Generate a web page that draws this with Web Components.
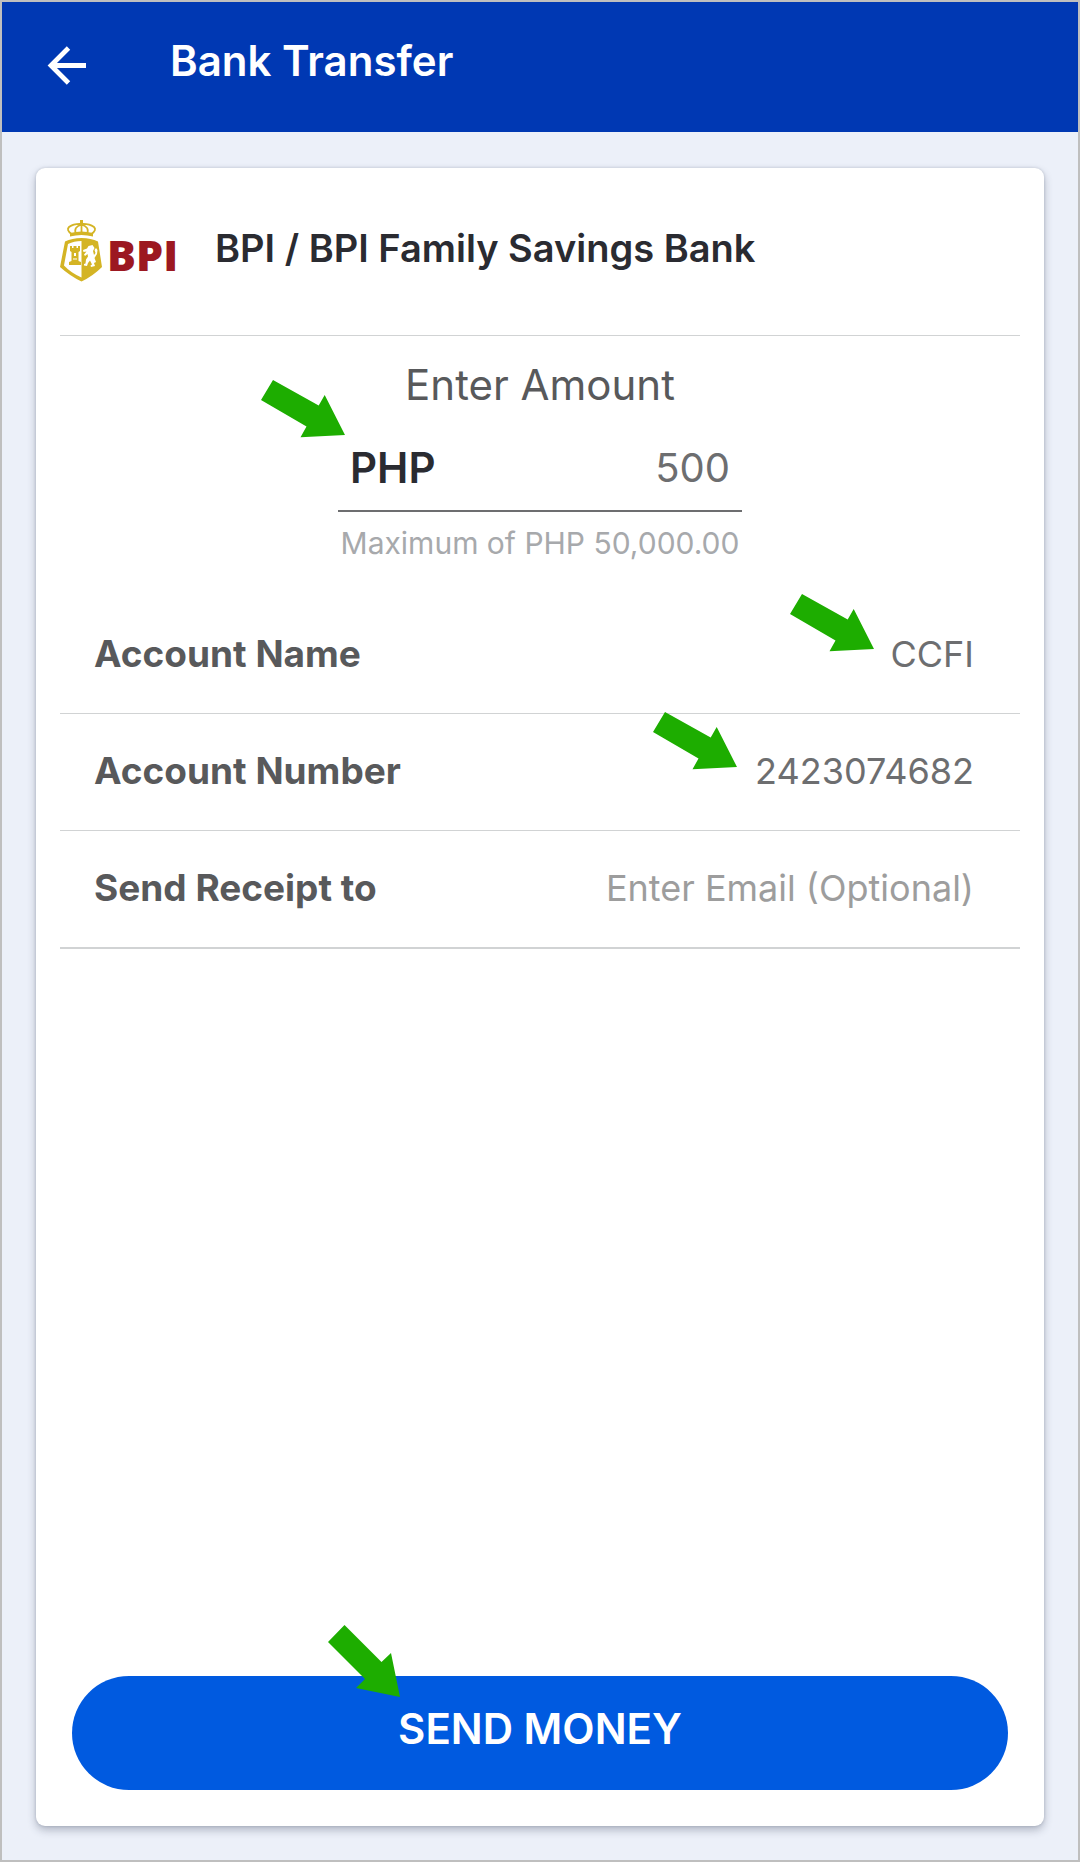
<!DOCTYPE html>
<html lang="en">
<head>
<meta charset="utf-8">
<meta name="viewport" content="width=device-width, initial-scale=1">
<title>Bank Transfer</title>
<style>
  body { margin: 0; background: #ecf0f9; font-family: Inter, "Open Sans", sans-serif; color: #58595b; }
</style>
</head>
<body>
<transfer-page></transfer-page>
<script>
const define = (name, html, setup) => {
  const template = document.createElement('template');
  template.innerHTML = html;
  customElements.define(name, class extends HTMLElement {
    connectedCallback() {
      if (this.shadowRoot) return;
      this.attachShadow({ mode: 'open' }).append(template.content.cloneNode(true));
      if (setup) setup(this, this.shadowRoot);
    }
  });
};

define('app-bar', `
  <style>
    :host { display: flex; align-items: center; box-sizing: border-box; height: 130px; padding: 0 44px; background: #0038b3; color: #fff; }
    button { display: flex; padding: 0; border: 0; background: none; color: inherit; cursor: pointer; }
    svg { width: 44px; height: 44px; }
    h1 { margin: 0 0 12px; padding-left: 80px; font-size: 42px; line-height: 56px; font-weight: 600; }
  </style>
  <button type="button" aria-label="Back">
    <svg viewBox="0 0 44 44" fill="none" stroke="currentColor" stroke-width="4.8"><path d="M40 20.500H5M22.500 3L5 20.500l17.500 17.500"/></svg>
  </button>
  <h1><slot></slot></h1>
`);

define('bank-logo', `
  <style>
    :host { display: block; flex: none; width: 120px; height: 62px; }
    svg { display: block; width: 120px; height: 62px; overflow: visible; }
    text { font: 800 43px "Open Sans", sans-serif; fill: #9c1821; }
  </style>
  <svg viewBox="0 0 120 62" role="img" aria-label="BPI">
    <g fill="none" stroke="#d4b424" stroke-width="1.800">
      <path d="M11.500 14Q6 10 9 7Q14 3.500 21.500 4Q29 3.500 34 7Q37 10 31.500 14M16 14Q13 7 21.500 4.500Q30 7 27 14M21.500 3V14"/>
    </g>
    <path fill="#d4b424" d="M20 0h3v4h-3zM10 13Q21.500 10 33 13V16.500Q21.500 13.500 10 16.500zM21.500 18Q31 18 38 21.500L42 47Q33 56 21.500 61.500Q10 56 0 47L5 21.500Q12 18 21.500 18z"/>
    <path fill="#fff" d="M21.500 21V57.500Q11 53 4 45.500L8 24Q14 21 21.500 21z"/>
    <path fill="#d4b424" d="M10 26h2v2h1.500v-2h3v2H18v-2h2v5l-1.500 1v9l2.500 1v3H9v-3l2.500-1v-9L10 31z"/>
    <path fill="#fff" d="M14 33h2v3h-2zM13 38.500h4v1h-4z"/>
    <path fill="#fff" d="M28.500 26l4-1 2 3-1.500 3 1 4 1.500-2-1-3 1.500-2 1.500 2-.5 4-2.500 4 1.500 4-2 1 1 3-4 1-.5-1.500 1.500-1-2-4-2 2.500-1 3-3-.5v-1.500l1.500-.5.5-4 2-3-.5-2.500-2.500 2-1-1.500 2.500-3-3 .5-.5-2 4-1.500z"/>
    <text x="47" y="51">BPI</text>
  </svg>
`);

define('pointer-arrow', `
  <style>
    :host { position: absolute; z-index: 1; width: 84px; height: 58px; pointer-events: none; }
    :host([steep]) { width: 72px; height: 72px; }
    svg { display: block; width: 100%; height: 100%; overflow: visible; fill: #1dad00; }
    :host([steep]) .flat, :host(:not([steep])) .steep { display: none; }
  </style>
  <svg class="flat" viewBox="0 0 84 58" aria-hidden="true"><path d="M0 20L12 0L57.700 25.500L63.700 15L84 55L39.500 57.300L45.500 46.500z"/></svg>
  <svg class="steep" viewBox="0 0 72 72" aria-hidden="true"><path d="M0 17L16.500 0L53.500 37L63 28L72 72L28 63L37 54z"/></svg>
`);

define('bank-heading', `
  <style>
    :host { display: flex; align-items: center; gap: 35px; padding: 52px 0 53px; border-bottom: 1px solid #d1d3d4; color: #2a2b31; }
    h2 { margin: 0 0 6px; font-size: 38px; line-height: 50px; font-weight: 600; }
  </style>
  <bank-logo></bank-logo>
  <h2><slot></slot></h2>
`);

define('amount-field', `
  <style>
    :host { display: flex; flex-direction: column; align-items: center; padding: 25px 0 38px; }
    label { font-size: 42px; line-height: 48px; }
    .box { position: relative; display: flex; align-items: center; justify-content: space-between; box-sizing: border-box; width: 404px; height: 86px; margin-top: 17px; padding: 0 12px; border-bottom: 2px solid #6d6e70; }
    .currency { color: #2a2b31; font-size: 42px; line-height: 50px; font-weight: 600; }
    input { width: 200px; padding: 0; border: 0; outline: 0; background: none; color: #6d6e70; font: 40px/50px Inter, sans-serif; text-align: right; }
    .hint { margin-top: 15px; font-size: 30px; line-height: 32px; color: #a7a9ac; }
    pointer-arrow { right: 397px; bottom: 72px; }
  </style>
  <label for="amount">Enter Amount</label>
  <div class="box">
    <pointer-arrow></pointer-arrow>
    <span class="currency">PHP</span>
    <input id="amount" type="text" inputmode="decimal" value="500">
  </div>
  <div class="hint">Maximum of PHP 50,000.00</div>
`);

define('form-row', `
  <style>
    :host { display: flex; align-items: center; position: relative; box-sizing: border-box; gap: 24px; height: 117px; padding: 0 46px 2px 34px; border-bottom: 1px solid #d1d3d4; }
    :host([last]) { height: 118px; border-bottom-width: 2px; }
    label { flex: none; font-size: 37px; line-height: 48px; font-weight: 700; }
    input { flex: 1; min-width: 0; padding: 0; border: 0; outline: 0; background: none; color: #6d6e70; font: 36px/48px Inter, sans-serif; text-align: right; }
    input::placeholder { color: #9d9d9d; opacity: 1; }
  </style>
  <label for="field"></label>
  <input id="field">
  <slot></slot>
`, (host, root) => {
  const input = root.querySelector('input');
  root.querySelector('label').textContent = host.getAttribute('label');
  input.type = host.getAttribute('type') || 'text';
  input.value = host.getAttribute('value') || '';
  input.placeholder = host.getAttribute('placeholder') || '';
});

define('send-button', `
  <style>
    :host { display: block; position: relative; margin: auto 12px 36px; }
    button { display: block; width: 100%; height: 114px; padding: 0 0 8px; border: 0; border-radius: 57px; background: #005ae0; color: #fff; font: 600 42px/56px Inter, sans-serif; cursor: pointer; }
    pointer-arrow { right: calc(50% + 140px); top: -51px; }
  </style>
  <button type="button"><slot></slot></button>
  <pointer-arrow steep></pointer-arrow>
`);

define('transfer-page', `
  <style>
    :host { display: flex; flex-direction: column; box-sizing: border-box; min-height: 100vh; border: 2px solid #bfbfbf; background: #ecf0f9; }
    main { flex: 1; display: flex; flex-direction: column; margin: 36px 34px 34px; padding: 0 24px; border-radius: 9px; background: #fff; box-shadow: 0 4px 8px rgba(50, 60, 85, .32), 0 0 3px rgba(50, 60, 85, .2); }
    .name pointer-arrow { right: 146px; bottom: 61px; }
    .number pointer-arrow { right: 283px; bottom: 60px; }
  </style>
  <app-bar>Bank Transfer</app-bar>
  <main>
    <bank-heading>BPI / BPI Family Savings Bank</bank-heading>
    <amount-field></amount-field>
    <form-row class="name" label="Account Name" value="CCFI"><pointer-arrow></pointer-arrow></form-row>
    <form-row class="number" label="Account Number" value="2423074682"><pointer-arrow></pointer-arrow></form-row>
    <form-row last label="Send Receipt to" type="email" placeholder="Enter Email (Optional)"></form-row>
    <send-button>SEND MONEY</send-button>
  </main>
`);
</script>
</body>
</html>
